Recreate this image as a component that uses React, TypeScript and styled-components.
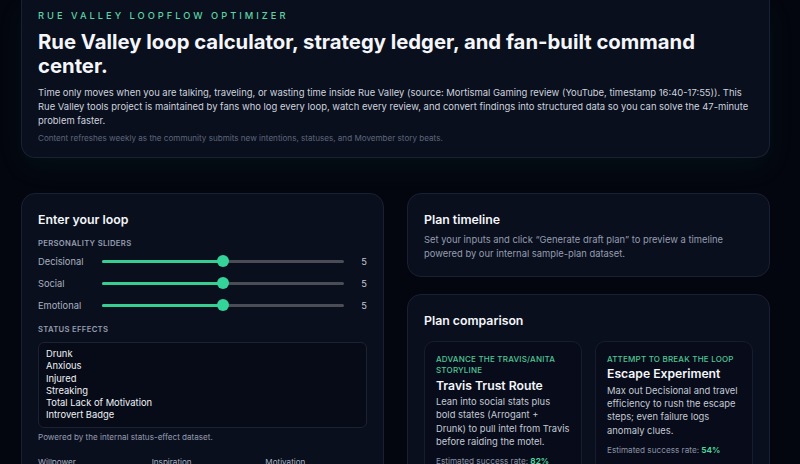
import React from "react";
import styled, { createGlobalStyle } from "styled-components";

const GlobalStyle = createGlobalStyle`
  html, body {
    margin: 0;
    padding: 0;
    background: #04060f;
  }
  body {
    font-family: Inter, "Noto Sans", "Liberation Sans", sans-serif;
    color: #e5e9f0;
    -webkit-font-smoothing: antialiased;
  }
  * {
    box-sizing: border-box;
  }
`;

const sliders = [
  { label: "Decisional", value: 5 },
  { label: "Social", value: 5 },
  { label: "Emotional", value: 5 },
];

const statuses = [
  "Drunk",
  "Anxious",
  "Injured",
  "Streaking",
  "Total Lack of Motivation",
  "Introvert Badge",
];

const meters = ["Willpower", "Inspiration", "Motivation"];

const plans = [
  {
    goal: "Advance the Travis/Anita storyline",
    name: "Travis Trust Route",
    body: "Lean into social stats plus bold states (Arrogant + Drunk) to pull intel from Travis before raiding the motel.",
    rate: 82,
  },
  {
    goal: "Attempt to break the loop",
    name: "Escape Experiment",
    body: "Max out Decisional and travel efficiency to rush the escape steps; even failure logs anomaly clues.",
    rate: 54,
  },
];

export default function App() {
  return (
    <>
      <GlobalStyle />
      <Page>
        <Hero>
          <Eyebrow>Rue Valley Loopflow Optimizer</Eyebrow>
          <HeroTitle>
            Rue Valley loop calculator, strategy ledger, and fan-built command
            center.
          </HeroTitle>
          <HeroText>
            Time only moves when you are talking, traveling, or wasting time
            inside Rue Valley (source: Mortismal Gaming review (YouTube,
            timestamp 16:40-17:55)). This Rue Valley tools project is maintained
            by fans who log every loop, watch every review, and convert findings
            into structured data so you can solve the 47-minute problem faster.
          </HeroText>
          <HeroNote>
            Content refreshes weekly as the community submits new intentions,
            statuses, and Movember story beats.
          </HeroNote>
        </Hero>

        <Columns>
          <Card>
            <CardTitle>Enter your loop</CardTitle>
            <SectionLabel>Personality sliders</SectionLabel>
            {sliders.map((s) => (
              <SliderRow key={s.label}>
                <SliderLabel>{s.label}</SliderLabel>
                <Track role="slider" aria-valuenow={s.value}>
                  <Fill style={{ width: `${s.value * 10}%` }} />
                  <Thumb style={{ left: `${s.value * 10}%` }} />
                </Track>
                <SliderValue>{s.value}</SliderValue>
              </SliderRow>
            ))}
            <SectionLabel>Status effects</SectionLabel>
            <StatusBox>
              {statuses.map((s) => (
                <StatusLine key={s}>{s}</StatusLine>
              ))}
            </StatusBox>
            <Hint>Powered by the internal status-effect dataset.</Hint>
            <MeterGrid>
              {meters.map((m) => (
                <MeterLabel key={m}>{m}</MeterLabel>
              ))}
            </MeterGrid>
          </Card>

          <Stack>
            <Card>
              <CardTitle>Plan timeline</CardTitle>
              <CardText>
                Set your inputs and click “Generate draft plan” to preview a
                timeline powered by our internal sample-plan dataset.
              </CardText>
            </Card>
            <Card>
              <CardTitle>Plan comparison</CardTitle>
              <PlanGrid>
                {plans.map((p) => (
                  <PlanCard key={p.name}>
                    <PlanGoal>{p.goal}</PlanGoal>
                    <PlanName>{p.name}</PlanName>
                    <PlanBody>{p.body}</PlanBody>
                    <PlanRate>
                      Estimated success rate: <strong>{p.rate}%</strong>
                    </PlanRate>
                  </PlanCard>
                ))}
              </PlanGrid>
            </Card>
          </Stack>
        </Columns>
      </Page>
    </>
  );
}

const Page = styled.div`
  padding: 0 30px 40px 21px;
  height: 464px;
  overflow: hidden;
`;

const Hero = styled.header`
  background: #0a0f1e;
  border: 1px solid #1a2133;
  border-top: none;
  border-radius: 0 0 14px 14px;
  padding: 10px 16px 13px;
  box-shadow: 0 10px 28px rgba(20, 160, 120, 0.07);
`;

const Eyebrow = styled.div`
  font-size: 9.3px;
  line-height: 12px;
  letter-spacing: 3px;
  text-transform: uppercase;
  color: #5cd3a4;
  font-weight: 500;
`;

const HeroTitle = styled.h1`
  margin: 8px 0 0;
  font-size: 20.3px;
  line-height: 24px;
  font-weight: 700;
  color: #f4f6fa;
`;

const HeroText = styled.p`
  margin: 8px 0 0;
  font-size: 9.45px;
  line-height: 14px;
  color: #cdd3dd;
`;

const HeroNote = styled.p`
  margin: 4px 0 0;
  font-size: 8.1px;
  line-height: 12px;
  color: #5d6679;
`;

const Columns = styled.div`
  margin-top: 35px;
  display: grid;
  grid-template-columns: 1fr 1fr;
  gap: 23px;
  align-items: start;
`;

const Stack = styled.div`
  display: flex;
  flex-direction: column;
  gap: 17px;
`;

const Card = styled.section`
  background: #0a0f1e;
  border: 1px solid #192032;
  border-radius: 14px;
  padding: 16px;
`;

const CardTitle = styled.h2`
  margin: 0;
  font-size: 12.3px;
  line-height: 20px;
  font-weight: 600;
  color: #f4f6fa;
`;

const CardText = styled.p`
  margin: 3px 0 0;
  font-size: 9.4px;
  line-height: 13.5px;
  color: #959daf;
`;

const SectionLabel = styled.div`
  margin-top: 8px;
  font-size: 7.7px;
  line-height: 12px;
  font-weight: 600;
  letter-spacing: 0.3px;
  text-transform: uppercase;
  color: #959daf;
`;

const SliderRow = styled.div`
  display: grid;
  grid-template-columns: 64px 242px 1fr;
  align-items: center;
  height: 22px;
  &:first-of-type {
    margin-top: 1px;
  }
`;

const SliderLabel = styled.span`
  font-size: 9.3px;
  color: #a7afbf;
`;

const Track = styled.div`
  position: relative;
  height: 3px;
  border-radius: 2px;
  background: #4a4d55;
`;

const Fill = styled.div`
  height: 100%;
  border-radius: 2px;
  background: #36cf91;
`;

const Thumb = styled.div`
  position: absolute;
  top: 50%;
  width: 12px;
  height: 12px;
  border-radius: 50%;
  background: #34d399;
  transform: translate(-50%, -50%);
`;

const SliderValue = styled.span`
  text-align: right;
  font-size: 9.3px;
  color: #c3c9d4;
`;

const StatusBox = styled.div`
  margin-top: 6px;
  width: 329px;
  height: 86px;
  background: #070b17;
  border: 1px solid #1b2234;
  border-radius: 6px;
  padding: 5px 7px;
`;

const StatusLine = styled.div`
  font-size: 9.4px;
  line-height: 12.3px;
  color: #eef1f6;
`;

const Hint = styled.p`
  margin: 3px 0 0;
  font-size: 8.1px;
  line-height: 12px;
  color: #959daf;
`;

const MeterGrid = styled.div`
  margin-top: 13px;
  display: grid;
  grid-template-columns: repeat(3, 1fr);
  gap: 12px;
  width: 329px;
`;

const MeterLabel = styled.span`
  font-size: 8.1px;
  line-height: 12px;
  color: #a7afbf;
`;

const PlanGrid = styled.div`
  margin-top: 10px;
  display: grid;
  grid-template-columns: 158px 158px;
  gap: 13px;
`;

const PlanCard = styled.article`
  background: #080c1a;
  border: 1px solid #161d2e;
  border-radius: 10px;
  padding: 11.5px 10.5px 14px 11px;
`;

const PlanGoal = styled.div`
  font-size: 8px;
  line-height: 11.5px;
  font-weight: 500;
  letter-spacing: 0.2px;
  text-transform: uppercase;
  color: #4fc595;
`;

const PlanName = styled.h3`
  margin: 0;
  font-size: 12.2px;
  line-height: 17px;
  font-weight: 600;
  color: #f4f6fa;
`;

const PlanBody = styled.p`
  margin: 1.5px 0 0;
  font-size: 9.4px;
  line-height: 13.4px;
  color: #c3c9d4;
`;

const PlanRate = styled.p`
  margin: 6.5px 0 0;
  font-size: 8.2px;
  line-height: 12px;
  color: #8a92a4;
  & strong {
    color: #4fd29b;
    font-weight: 700;
  }
`;
